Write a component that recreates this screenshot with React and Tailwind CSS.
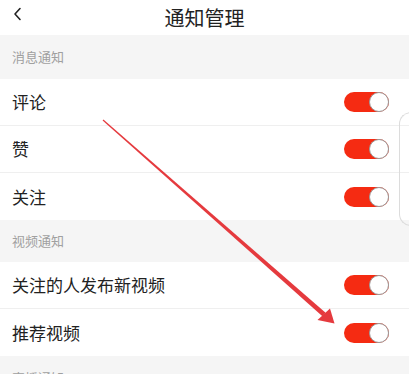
import React from 'react';

const Toggle = () => (
  <div className="relative w-[45px] h-[20px] rounded-full bg-[#f52b12]">
    <div className="absolute right-0 top-0 w-[20px] h-[20px] rounded-full bg-white border border-[#9a9a9a]" />
  </div>
);

const Section = ({ title, h = 'h-[44px]' }) => (
  <div className={`${h} bg-[#f5f5f5] flex items-center pl-3 text-[13px] text-[#a0a0a0]`}>{title}</div>
);

const Row = ({ label, last }) => (
  <div className={`h-[47px] flex items-center justify-between pl-3 pr-5 bg-white ${last ? '' : 'border-b border-[#efefef]'}`}>
    <span className="text-[17px] text-[#222]">{label}</span>
    <Toggle />
  </div>
);

export default function App() {
  return (
    <div
      className="relative w-[409px] h-[374px] overflow-hidden bg-white"
      style={{ fontFamily: '"Noto Sans CJK SC", "Noto Sans", sans-serif' }}
    >
      <div className="h-[35px] flex items-center justify-center relative">
        <svg className="absolute left-[12px] top-[7px]" width="12" height="14" viewBox="0 0 12 14">
          <path d="M8 1.5 L3 7 L8 12.5" fill="none" stroke="#222" strokeWidth="1.6" strokeLinecap="round" strokeLinejoin="round" />
        </svg>
        <span className="text-[20px] text-[#222] leading-none">通知管理</span>
      </div>

      <Section title="消息通知" />
      <Row label="评论" />
      <Row label="赞" />
      <Row label="关注" last />

      <Section title="视频通知" h="h-[42px]" />
      <Row label="关注的人发布新视频" />
      <Row label="推荐视频" last />

      <Section title="直播通知" />

      {/* phone edge overlay */}
      <div className="absolute left-[399px] top-[112px] w-[20px] h-[114px] border-l border-y border-[#dcdcdc] rounded-l-[12px]" />

      {/* annotation arrow */}
      <svg className="absolute inset-0 pointer-events-none" width="409" height="374" viewBox="0 0 409 374">
        <polygon points="102.6,120.4 103.4,119.6 325.6,312.8 322.4,316.2" fill="#e53a3e" />
        <polygon points="330,308.5 334.5,323.5 317.5,320" fill="#e53a3e" />
      </svg>
    </div>
  );
}
